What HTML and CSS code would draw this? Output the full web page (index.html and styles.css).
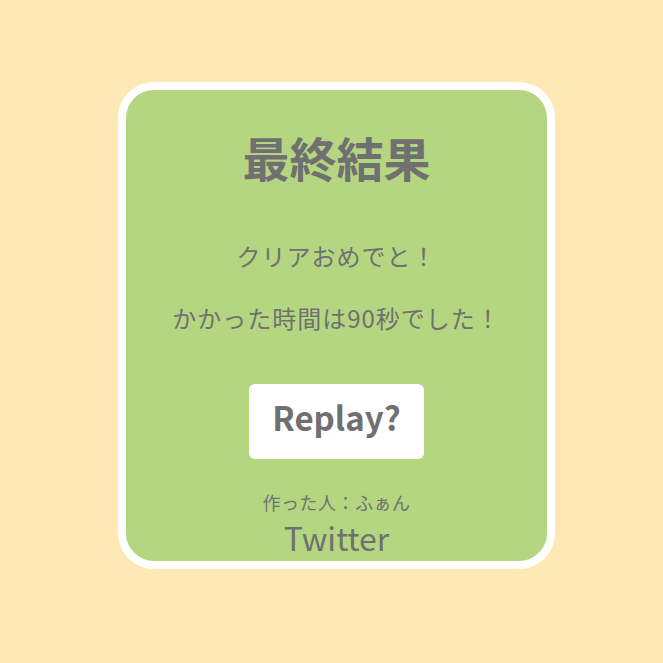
FILE: index.html
```html
<!DOCTYPE html>
<html lang="ja">
<head>
<meta charset="utf-8">
<title>最終結果</title>
<link rel="stylesheet" href="styles.css">
</head>
<body>
<div class="card">
  <h1 class="title">最終結果</h1>
  <p class="msg msg-first">クリアおめでと！</p>
  <p class="msg msg-second">かかった時間は90秒でした！</p>
  <button class="replay">Replay?</button>
  <p class="credit">作った人：ふぁん</p>
  <a class="twitter">Twitter</a>
</div>
</body>
</html>
```

FILE: styles.css
```css
html, body {
  margin: 0;
  padding: 0;
  background: #fee9b4;
}
body {
  width: 663px;
  height: 663px;
  overflow: hidden;
  font-family: "Noto Sans CJK JP", "DejaVu Sans", sans-serif;
  color: #707070;
}
.card {
  box-sizing: border-box;
  width: 437px;
  height: 487px;
  margin: 82px 0 0 118px;
  border: 8px solid #ffffff;
  border-radius: 36px;
  background: #b5d681;
  display: flex;
  flex-direction: column;
  align-items: center;
  padding-top: 39px;
}
.title {
  margin: 0;
  font-size: 47px;
  line-height: 56px;
  font-weight: 700;
}
.msg {
  margin: 0;
  font-size: 24px;
  line-height: 32px;
  letter-spacing: 1px;
}
.msg-first { margin-top: 55px; }
.msg-second { margin-top: 30px; }
.replay {
  margin-top: 50px;
  width: 175px;
  height: 75px;
  border: none;
  border-radius: 6px;
  background: #ffffff;
  color: #707070;
  font-family: inherit;
  font-size: 33px;
  font-weight: 700;
  padding: 0 0 9px;
}
.credit {
  margin: 31px 0 0;
  font-size: 18px;
  line-height: 24px;
  letter-spacing: 0.5px;
}
.twitter {
  margin-top: 5px;
  font-size: 32px;
  line-height: 36px;
  color: #707070;
  text-decoration: none;
}
```
